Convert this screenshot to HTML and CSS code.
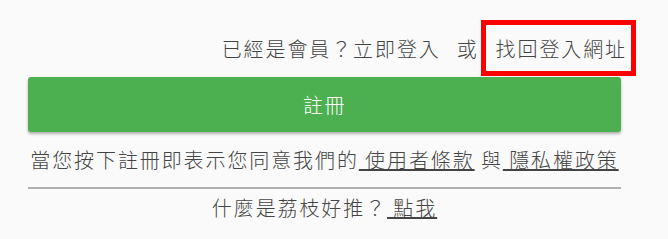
FILE: index.html
```html
<!DOCTYPE html>
<html lang="zh-TW">
<head>
    <meta charset="UTF-8">
    <meta name="viewport" content="width=device-width, initial-scale=1.0">
    <title>註冊</title>
    <link rel="stylesheet" href="styles.css">
</head>
<body>
    <div class="signup-footer">
        <div class="login-row">
            <span>已經是會員？立即登入</span>
            <span class="or">或</span>
            <a class="find-url" href="#">找回登入網址</a>
        </div>

        <button class="signup-btn">註冊</button>

        <p class="terms">當您按下註冊即表示您同意我們的<a href="#"> 使用者條款</a> 與<a href="#"> 隱私權政策</a></p>

        <hr class="divider">

        <p class="about">什麼是荔枝好推？<a href="#"> 點我</a></p>
    </div>
</body>
</html>
```

FILE: styles.css
```css
body {
    margin: 0;
    padding: 0;
    background-color: #fafafa;
    font-family: "Noto Sans CJK TC", "Noto Sans", sans-serif;
    font-weight: 300;
    color: #444;
}

.signup-footer {
    padding: 20px 47px 0 28px;
    font-size: 20px;
    letter-spacing: 1.9px;
}

.login-row {
    display: flex;
    justify-content: flex-end;
    align-items: center;
    margin-right: -15px;
    margin-bottom: 1px;
}

.or {
    margin-left: 16px;
}

.find-url {
    display: flex;
    align-items: center;
    height: 46px;
    margin-left: 2px;
    padding: 0 4px 0 10px;
    border: 5px solid #ff0000;
    color: #444;
    text-decoration: none;
}

.signup-btn {
    display: block;
    width: 100%;
    height: 55px;
    border: none;
    border-radius: 3px;
    background-color: #4caf50;
    color: #fff;
    font-family: inherit;
    font-weight: 300;
    font-size: 20px;
    letter-spacing: 1.6px;
    box-shadow: 0 2px 3px rgba(0, 0, 0, 0.3);
    cursor: pointer;
}

.terms,
.about {
    margin: 0;
    line-height: 30px;
    text-align: center;
    white-space: nowrap;
}

.terms {
    margin-top: 13px;
}

.terms a,
.about a {
    color: #444;
    text-decoration: underline;
}

.divider {
    margin: 12px 0 4px;
    border: none;
    border-top: 2px solid #b0b0b0;
}
```
